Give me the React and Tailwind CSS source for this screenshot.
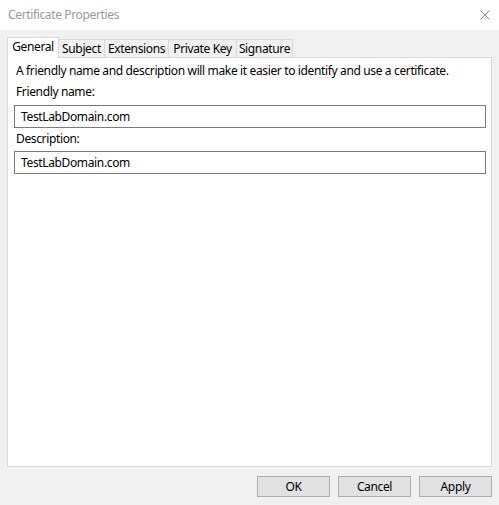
// Certificate Properties dialog (Windows style)
import React, { useState } from 'react';

const tabs = [
  { id: 'general', label: 'General', width: 'w-[52px]' },
  { id: 'subject', label: 'Subject', width: 'w-[47px]' },
  { id: 'extensions', label: 'Extensions', width: 'w-[65px]' },
  { id: 'privatekey', label: 'Private Key', width: 'w-[69px]' },
  { id: 'signature', label: 'Signature', width: 'w-[57px]' },
];

const App = () => {
  const [activeTab, setActiveTab] = useState('general');
  const [friendlyName, setFriendlyName] = useState('TestLabDomain.com');
  const [description, setDescription] = useState('TestLabDomain.com');

  return (
    <div className="w-[499px] h-[505px] bg-[#f0f0f0] flex flex-col text-[12px] tracking-[-0.36px] text-black font-['Noto_Sans',sans-serif] overflow-hidden">
      {/* Title bar */}
      <div className="h-[30px] bg-white flex items-center justify-between pl-[8px] pr-[9px] shrink-0">
        <span className="text-[#999999] leading-none">Certificate Properties</span>
        <svg width="10" height="10" viewBox="0 0 10 10" className="text-[#8a8a8a]">
          <path d="M0.5 0.5 L9.5 9.5 M9.5 0.5 L0.5 9.5" stroke="currentColor" strokeWidth="1" fill="none" />
        </svg>
      </div>

      {/* Tabs */}
      <div className="flex items-end h-[20px] mt-[7px] px-[7px] shrink-0">
        {tabs.map((tab, i) => {
          const active = tab.id === activeTab;
          return (
            <button
              key={tab.id}
              type="button"
              onClick={() => setActiveTab(tab.id)}
              className={
                active
                  ? `relative z-10 ${tab.width} h-[21px] -mb-px bg-white border border-b-0 border-[#d9d9d9] flex items-start justify-center pt-[1px] leading-[16px] whitespace-nowrap ${i > 0 ? '-ml-px' : ''}`
                  : `${tab.width} h-[18px] bg-[#f0f0f0] border border-b-0 border-[#d9d9d9] flex items-center justify-center leading-[16px] whitespace-nowrap ${i > 0 ? '-ml-px' : ''}`
              }
            >
              {tab.label}
            </button>
          );
        })}
      </div>

      {/* Panel */}
      <div className="flex-1 mx-[7px] bg-white border border-[#d9d9d9] px-[6px] pt-[5px] flex flex-col">
        <p className="h-[16px] leading-[16px] pl-[2px]">
          A friendly name and description will make it easier to identify and use a certificate.
        </p>
        <label className="h-[16px] leading-[16px] pl-[2px] mt-[5px]">Friendly name:</label>
        <input
          type="text"
          value={friendlyName}
          onChange={(e) => setFriendlyName(e.target.value)}
          className="h-[23px] mt-[5px] w-[472px] border border-[#7a7a7a] px-[6px] outline-none bg-white"
        />
        <label className="h-[16px] leading-[16px] pl-[2px] mt-[3px]">Description:</label>
        <input
          type="text"
          value={description}
          onChange={(e) => setDescription(e.target.value)}
          className="h-[23px] mt-[4px] w-[472px] border border-[#7a7a7a] px-[6px] outline-none bg-white"
        />
      </div>

      {/* Buttons */}
      <div className="flex justify-end gap-[8px] pt-[9px] pb-[8px] pr-[7px] shrink-0">
        <button type="button" className="w-[73px] h-[21px] bg-[#e1e1e1] border border-[#adadad] leading-none">
          OK
        </button>
        <button type="button" className="w-[73px] h-[21px] bg-[#e1e1e1] border border-[#adadad] leading-none">
          Cancel
        </button>
        <button type="button" className="w-[73px] h-[21px] bg-[#e1e1e1] border border-[#adadad] leading-none">
          Apply
        </button>
      </div>
    </div>
  );
};

export default App;
